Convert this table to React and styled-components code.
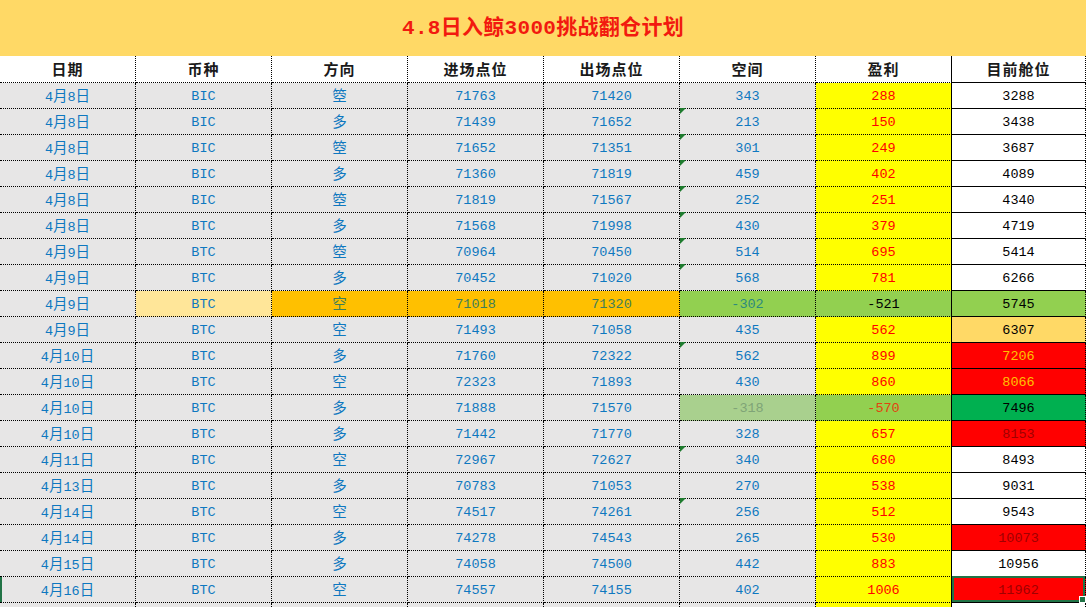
import React from "react";
import styled, { createGlobalStyle } from "styled-components";

const GlobalStyle = createGlobalStyle`
  html, body {
    margin: 0;
    padding: 0;
    background: #ffffff;
    overflow: hidden;
  }
`;

const MONO = `"Liberation Mono", "Noto Sans CJK SC", monospace`;

const headers = ["日期", "币种", "方向", "进场点位", "出场点位", "空间", "盈利", "目前舱位"];

// last column: bg / text colour
const POS = {
  plain: { bg: "#ffffff", fg: "#000000" },
  peach: { bg: "#FFD966", fg: "#000000" },
  hot: { bg: "#FF0000", fg: "#FFC000" },
  deep: { bg: "#FF0000", fg: "#A00000" },
  green: { bg: "#00B050", fg: "#000000" },
  lime: { bg: "#92D050", fg: "#000000" },
};

const rows = [
  ["4月8日", "BIC", "箜", "71763", "71420", "343", "288", "3288", "plain"],
  ["4月8日", "BIC", "多", "71439", "71652", "213", "150", "3438", "plain", true],
  ["4月8日", "BIC", "箜", "71652", "71351", "301", "249", "3687", "plain", true],
  ["4月8日", "BIC", "多", "71360", "71819", "459", "402", "4089", "plain", true],
  ["4月8日", "BIC", "箜", "71819", "71567", "252", "251", "4340", "plain", true],
  ["4月8日", "BTC", "多", "71568", "71998", "430", "379", "4719", "plain", true],
  ["4月9日", "BTC", "箜", "70964", "70450", "514", "695", "5414", "plain", true],
  ["4月9日", "BTC", "多", "70452", "71020", "568", "781", "6266", "plain", true],
  ["4月9日", "BTC", "空", "71018", "71320", "-302", "-521", "5745", "lime", false, "orange"],
  ["4月9日", "BTC", "空", "71493", "71058", "435", "562", "6307", "peach"],
  ["4月10日", "BTC", "多", "71760", "72322", "562", "899", "7206", "hot", true],
  ["4月10日", "BTC", "空", "72323", "71893", "430", "860", "8066", "hot"],
  ["4月10日", "BTC", "多", "71888", "71570", "-318", "-570", "7496", "green", false, "pale"],
  ["4月10日", "BTC", "多", "71442", "71770", "328", "657", "8153", "deep"],
  ["4月11日", "BTC", "空", "72967", "72627", "340", "680", "8493", "plain", true],
  ["4月13日", "BTC", "多", "70783", "71053", "270", "538", "9031", "plain"],
  ["4月14日", "BTC", "空", "74517", "74261", "256", "512", "9543", "plain", true],
  ["4月14日", "BTC", "多", "74278", "74543", "265", "530", "10073", "deep"],
  ["4月15日", "BTC", "多", "74058", "74500", "442", "883", "10956", "plain"],
  ["4月16日", "BTC", "空", "74557", "74155", "402", "1006", "11962", "deep"],
];

const Page = styled.div`
  width: 1086px;
  height: 607px;
  overflow: hidden;
  background: #ffffff;
`;

const TitleBar = styled.div`
  box-sizing: border-box;
  height: 56px;
  padding-top: 2px;
  line-height: 54px;
  background: #FFD966;
  text-align: center;
  color: #F21A0F;
  font-family: ${MONO};
  font-weight: 700;
  font-size: 21px;
  letter-spacing: 0.3px;
`;

const Grid = styled.div`
  display: grid;
  grid-template-columns: repeat(7, 136px) 134px;
`;

const Cell = styled.div`
  position: relative;
  box-sizing: border-box;
  height: ${({ $h }) => $h || 26}px;
  padding-top: 3px;
  line-height: ${({ $h }) => ($h || 26) - 4}px;
  text-align: center;
  white-space: nowrap;
  background: ${({ $bg }) => $bg || "#E7E6E6"};
  color: ${({ $fg }) => $fg || "#0E78C0"};
  font-family: ${MONO};
  font-size: 13.5px;
  border-right: 1px ${({ $solidRight }) => ($solidRight ? "solid" : "dotted")} #000;
  border-bottom: 1px ${({ $solidBottom }) => ($solidBottom ? "solid" : "dotted")} #000;
  ${({ $edge }) => ($edge ? "box-shadow: inset 2px 0 0 #217346;" : "")}
`;

const HeadCell = styled(Cell)`
  padding-top: 0;
  line-height: ${({ $h }) => ($h || 26) - 1}px;
  background: #ffffff;
  color: #1a1a1a;
  font-family: "Noto Sans CJK SC", sans-serif;
  font-weight: 700;
  font-size: 15px;
  letter-spacing: 1px;
`;

const Zh = styled.span`
  font-size: 14.5px;
`;

const Flag = styled.span`
  position: absolute;
  top: -1px;
  left: 0;
  width: 0;
  height: 0;
  border-top: 6px solid #1E7B2E;
  border-right: 6px solid transparent;
`;

const Selected = styled.span`
  position: absolute;
  inset: -1px 0 0 0;
  border: 2px solid #217346;
  pointer-events: none;

  &::after {
    content: "";
    position: absolute;
    right: -3px;
    bottom: -3px;
    width: 5px;
    height: 5px;
    background: #217346;
    border: 1px solid #fff;
  }
`;

const renderDate = (d) => {
  const m = d.match(/^(\d+)月(\d+)日$/);
  return (
    <>
      {m[1]}
      <Zh>月</Zh>
      {m[2]}
      <Zh>日</Zh>
    </>
  );
};

const Row = ({ r, idx }) => {
  const [date, coin, dir, entry, exit, gap, profit, pos, posKind, flag, special] = r;
  const p = POS[posKind];
  const isLast = idx === rows.length - 1;

  let coinBg, midBg, midFg, gapBg, gapFg;
  let profitBg = "#FFFF00";
  let profitFg = "#FF0000";
  if (special === "orange") {
    coinBg = "#FFE699";
    midBg = "#FFC000";
    midFg = "#3F7E5A";
    gapBg = "#92D050";
    gapFg = "#2C8A7E";
    profitBg = "#92D050";
    profitFg = "#000000";
  } else if (special === "pale") {
    gapBg = "#A9D08E";
    gapFg = "#7FA477";
    profitBg = "#92D050";
    profitFg = "#E2430F";
  }

  return (
    <>
      <Cell $edge={isLast}>{renderDate(date)}</Cell>
      <Cell $bg={coinBg}>{coin}</Cell>
      <Cell $bg={midBg} $fg={midFg}>
        <Zh>{dir}</Zh>
      </Cell>
      <Cell $bg={midBg} $fg={midFg}>{entry}</Cell>
      <Cell $bg={midBg} $fg={midFg}>{exit}</Cell>
      <Cell $bg={gapBg} $fg={gapFg}>
        {flag && <Flag />}
        {gap}
      </Cell>
      <Cell $bg={profitBg} $fg={profitFg} $solidRight>
        {profit}
      </Cell>
      <Cell $bg={p.bg} $fg={p.fg} $solidBottom>
        {pos}
        {isLast && <Selected />}
      </Cell>
    </>
  );
};

export default function App() {
  return (
    <Page>
      <GlobalStyle />
      <TitleBar>4.8日入鲸3000挑战翻仓计划</TitleBar>
      <Grid>
        {headers.map((h, i) => (
          <HeadCell key={h} $h={27} $solidRight={i === 6} $solidBottom={i === 7}>
            {h}
          </HeadCell>
        ))}
        {rows.map((r, i) => (
          <Row key={i} r={r} idx={i} />
        ))}
        {headers.map((h, i) => (
          <Cell
            key={"tail" + h}
            $bg={i === 6 ? "#FFFF00" : i === 7 ? "#ffffff" : undefined}
            $solidRight={i === 6}
          />
        ))}
      </Grid>
    </Page>
  );
}
